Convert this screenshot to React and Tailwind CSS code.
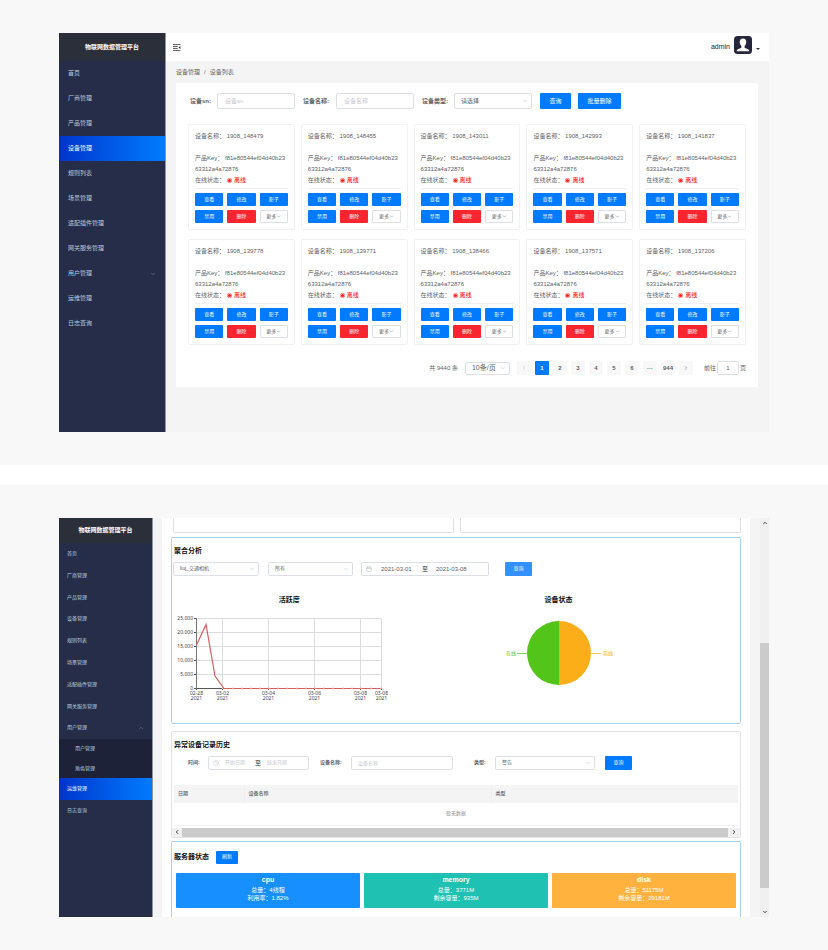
import React from "react";
import { Calendar, ChevronDown, ChevronLeft, ChevronRight, ChevronUp, Clock } from "lucide-react";

const menu = [
  "首页",
  "厂商管理",
  "产品管理",
  "设备管理",
  "规则列表",
  "场景管理",
  "适配插件管理",
  "网关服务管理",
  "用户管理",
  "运维管理",
  "日志查询",
];

const devices = [
  "1908_148479",
  "1908_148455",
  "1908_143011",
  "1908_142993",
  "1908_141837",
  "1908_139778",
  "1908_139771",
  "1908_138466",
  "1908_137571",
  "1908_137206",
];

const activeItem = "bg-gradient-to-r from-[#0033cc] to-[#007bff] text-white";

function SelectBox({ id, label, value, className }) {
  return (
    <div className={`relative shrink-0 ${className}`}>
      <select
        id={id}
        aria-label={label}
        className="block h-full w-full appearance-none rounded-xs border border-[#dcdfe6] bg-white pl-[6px] text-[#606266]"
      >
        <option>{value}</option>
      </select>
      <ChevronDown className="pointer-events-none absolute top-1/2 right-1 size-[6px] -translate-y-1/2 text-[#b4b8c0]" />
    </div>
  );
}

function DeviceCard({ name }) {
  const button = "h-[13px] rounded-[1px] text-[5px] leading-[11px] text-white";
  return (
    <article className="rounded-xs border border-[#f0f1f4] p-[6px] text-[6px] leading-[11px] text-[#606266]">
      <h3>{`设备名称：\u00a0${name}`}</h3>
      <p className="mt-[11px] pr-px break-all">{"产品Key：\u00a0f81e80544ef04d40b2363312a4a72876"}</p>
      <p className="flex items-center">
        <span className="mr-[2px]">在线状态：</span>
        <svg viewBox="0 0 10 10" className="mr-[2px] size-[5px]">
          <circle cx="5" cy="5" r="4.5" fill="none" stroke="#ff1f1f" strokeWidth="1" />
          <circle cx="5" cy="5" r="3.2" fill="#ff1f1f" />
        </svg>
        <span className="font-medium text-[#ff1f1f]">离线</span>
      </p>
      <div className="mt-[2px] grid grid-cols-3 gap-1 border-t border-[#eef0f4] pt-1">
        <button className={`${button} bg-[#007bff]`}>查看</button>
        <button className={`${button} bg-[#007bff]`}>修改</button>
        <button className={`${button} bg-[#007bff]`}>影子</button>
        <button className={`${button} bg-[#007bff]`}>禁用</button>
        <button className={`${button} bg-[#f9252f]`}>删除</button>
        <button className="flex h-[13px] items-center justify-center rounded-[1px] border border-[#dcdfe6] bg-white text-[5px] text-[#606266]">
          更多
          <ChevronDown className="size-[5px]" />
        </button>
      </div>
    </article>
  );
}

function DevicesScreen() {
  const input =
    "h-full w-[78px] shrink-0 rounded-xs border border-[#dcdfe6] bg-white px-[7px] font-normal placeholder:text-[#c6c9d0]";
  const page = "flex size-[14px] items-center justify-center rounded-[1px] bg-[#f8f8f9] font-bold text-[#606266]";
  return (
    <div className="mx-[59px] flex min-h-[399px] bg-[#f4f4f4] text-[6px] text-[#606266]">
      <aside className="w-[107px] shrink-0 border-r border-[#8f94a3] bg-[#252d49]">
        <h1 className="flex h-7 items-center justify-center bg-[#2b2f3a] font-bold text-white">物联网数据管理平台</h1>
        <nav>
          {menu.map((item) => (
            <a
              key={item}
              href="#"
              className={`flex h-[25px] items-center pr-[9px] pl-[9px] ${item === "设备管理" ? activeItem : "text-[#bfcbd9]"}`}
            >
              {item}
              {item === "用户管理" && <ChevronDown className="ml-auto size-[6px] text-[#8d97ab]" />}
            </a>
          ))}
        </nav>
      </aside>
      <div className="min-w-0 flex-1">
        <header className="flex h-7 items-center bg-white pr-[9px] pl-[7px]">
          <button aria-label="收起菜单" className="text-[#33363d]">
            <svg viewBox="0 0 16 14" className="h-[7px] w-2" fill="none" stroke="currentColor" strokeWidth="1.6">
              <path d="M0 1.2H15M0 5.1H9.5M0 8.9H9.5M0 12.8H15" />
              <path d="M15 4L11 7L15 10Z" fill="currentColor" stroke="none" />
            </svg>
          </button>
          <span className="ml-auto text-[7px] text-[#20242c]">admin</span>
          <svg viewBox="0 0 36 36" className="mb-[5px] ml-1 size-[18px]">
            <rect width="36" height="36" rx="7" fill="#26263a" />
            <path
              d="M18 5c4.4 0 6.8 3.2 6.5 7.600-.2 3.500-1.500 6-3.300 7.500v2.600c0 1.200 1.200 1.700 3.300 2.500 3.600 1.300 6 2 6.300 5.300H5.200c.3-3.300 2.700-4 6.300-5.300 2.100-.8 3.300-1.300 3.300-2.500v-2.600c-1.800-1.500-3.100-4-3.300-7.500C11.200 8.200 13.600 5 18 5Z"
              fill="#fff"
            />
          </svg>
          <svg viewBox="0 0 8 4" className="mt-1 ml-1 h-[2px] w-1">
            <path d="M0 0H8L4 4Z" fill="#303133" />
          </svg>
        </header>
        <nav aria-label="面包屑" className="flex h-[22px] items-center gap-1 pl-[10px]">
          <a href="#">设备管理</a>
          <span>/</span>
          <span>设备列表</span>
        </nav>
        <main className="mr-[11px] ml-[10px] bg-white px-3 pt-[10px] pb-3">
          <form className="flex h-4 items-center pl-[2px] font-bold">
            <label htmlFor="sn" className="w-[27px] shrink-0">
              设备sn:
            </label>
            <input id="sn" placeholder="设备sn" className={input} />
            <label htmlFor="name" className="ml-2 w-[33px] shrink-0">
              设备名称:
            </label>
            <input id="name" placeholder="设备名称" className={input} />
            <label htmlFor="type" className="ml-2 w-8 shrink-0">
              设备类型:
            </label>
            <SelectBox id="type" value="请选择" className="h-full w-[78px] font-normal" />
            <button type="button" className="ml-2 h-full w-[31px] rounded-[1px] bg-[#007bff] font-normal text-white">
              查询
            </button>
            <button type="button" className="ml-[7px] h-full w-[43px] rounded-[1px] bg-[#007bff] font-normal text-white">
              批量删除
            </button>
          </form>
          <div className="mt-[15px] grid grid-cols-5 gap-x-[6px] gap-y-[9px]">
            {devices.map((name) => (
              <DeviceCard key={name} name={name} />
            ))}
          </div>
          <nav aria-label="分页" className="mt-4 flex h-[14px] items-center justify-end">
            <span>共 9440 条</span>
            <SelectBox label="每页条数" value="10条/页" className="ml-[7px] h-[13px] w-[45px] text-[7px]" />
            <div className="ml-[7px] flex gap-1">
              <button aria-label="上一页" className={page}>
                <ChevronLeft className="size-[6px] text-[#a9adb5]" />
              </button>
              <button className="flex size-[14px] items-center justify-center rounded-[1px] bg-[#007bff] font-bold text-white">
                1
              </button>
              {["2", "3", "4", "5", "6", "···", "944"].map((n) => (
                <button key={n} className={page}>
                  {n}
                </button>
              ))}
              <button aria-label="下一页" className={page}>
                <ChevronRight className="size-[6px]" />
              </button>
            </div>
            <label htmlFor="goto" className="ml-[11px]">
              前往
            </label>
            <input
              id="goto"
              defaultValue="1"
              className="mx-px h-full w-[22px] rounded-xs border border-[#dcdfe6] text-center"
            />
            <span>页</span>
          </nav>
        </main>
      </div>
    </div>
  );
}

function ActivityChart() {
  const rows = ["25,000", "20,000", "15,000", "10,000", "5,000", "0"];
  const columns = [
    [23.5, "02-28"],
    [49.5, "03-02"],
    [95.5, "03-04"],
    [141.5, "03-06"],
    [187.5, "03-08"],
    [208.5, "03-08"],
  ];
  const dots = [60, 69, 78, 87, 96, 105, 114, 124, 133, 142, 151, 160, 170, 179, 188, 198, 208];
  return (
    <svg width="232" height="110" className="font-['Noto_Sans',sans-serif] text-[5px]" fill="#444">
      {rows.map((label, i) => (
        <g key={label}>
          <path d={`M23 ${12.5 + i * 14}H209`} stroke={i === 5 ? "#555" : "#ddd"} />
          <path d={`M21 ${12.5 + i * 14}H23`} stroke="#555" />
          <text x="20" y={14 + i * 14} textAnchor="end">
            {label}
          </text>
        </g>
      ))}
      {columns.map(([x, label], i) => (
        <g key={x} textAnchor="middle">
          <path d={`M${x} 12V83`} stroke={i === 0 ? "#777" : "#ddd"} />
          <path d={`M${x} 83V84`} stroke="#555" />
          <text x={x} y="89">
            {label}
          </text>
          <text x={x} y="94">
            2021
          </text>
        </g>
      ))}
      <path d="M23.500 39L33 18.500L42 70L51 82.500H208.500" fill="none" stroke="#d4605e" strokeWidth="1.200" />
      {dots.map((x) => (
        <circle key={x} cx={x} cy="82.500" r="0.700" fill="#fff" stroke="#d4605e" strokeWidth="0.500" />
      ))}
    </svg>
  );
}

function StatusPie() {
  return (
    <svg width="120" height="110" className="text-[5px]">
      <path d="M60 15A32 32 0 0 0 60 79Z" fill="#52c41a" />
      <path d="M60 15A32 32 0 0 1 60 79Z" fill="#fcae18" />
      <path d="M18 47.500H28" stroke="#52c41a" strokeOpacity="0.700" />
      <path d="M92 47.500H102" stroke="#fcae18" strokeOpacity="0.700" />
      <text x="17" y="49" textAnchor="end" fill="#52c41a">
        在线
      </text>
      <text x="104" y="49" fill="#fcae18">
        离线
      </text>
    </svg>
  );
}

function Tile({ name, lines, color }) {
  return (
    <div className={`h-[35px] rounded-[1px] pt-[2px] text-center text-[6px] leading-[8px] text-white ${color}`}>
      <h3 className="mb-px text-[7px] leading-[10px] font-bold">{name}</h3>
      {lines.map((line) => (
        <p key={line}>{line}</p>
      ))}
    </div>
  );
}

function OperationsScreen() {
  const item = "flex flex-1 items-center px-2 text-[#bfcbd9]";
  const title = "text-[7px] leading-[12px] font-bold text-[#111]";
  const range = "flex h-full shrink-0 items-center rounded-xs border border-[#dcdfe6] bg-white";
  const button = "h-full w-[27px] shrink-0 rounded-[1px] text-white";
  return (
    <div className="mx-[59px] flex h-[399px] overflow-hidden bg-[#f4f4f4] text-[5px] text-[#606266]">
      <aside className="w-[94px] shrink-0 border-r border-[#8f94a3] bg-[#252d49]">
        <h1 className="flex h-[25px] items-center justify-center bg-[#2b2f3a] text-[6px] font-bold text-white">
          物联网数据管理平台
        </h1>
        <nav>
          <div className="flex h-[196px] flex-col">
            {menu.slice(0, 9).map((name) => (
              <a key={name} href="#" className={item}>
                {name}
                {name === "用户管理" && <ChevronUp className="ml-auto size-[6px] text-[#8d97ab]" />}
              </a>
            ))}
          </div>
          <div className="flex h-[39px] flex-col bg-[#1d2239] pl-2">
            <a href="#" className={item}>
              用户管理
            </a>
            <a href="#" className={item}>
              角色管理
            </a>
          </div>
          <a href="#" className={`flex h-[22px] items-center px-2 ${activeItem}`}>
            运维管理
          </a>
          <a href="#" className="flex h-[22px] items-center px-2 text-[#bfcbd9]">
            日志查询
          </a>
        </nav>
      </aside>
      <main className="mr-[10px] ml-[9px] min-w-0 flex-1 bg-white px-[9px]">
        <div className="ml-[2px] grid h-[15px] grid-cols-2 gap-[6px]">
          <div className="rounded-b-xs border border-t-0 border-[#dcdfe6]" />
          <div className="rounded-b-xs border border-t-0 border-[#dcdfe6]" />
        </div>

        <section className="mt-1 rounded-xs border border-[#a9d3fb] pt-[7px] pb-[7px] pl-px">
          <h2 className={`pl-px ${title}`}>聚合分析</h2>
          <form className="mt-[5px] flex h-[14px]">
            <SelectBox label="产品" value="liuj_交通相机" className="h-full w-[86px]" />
            <SelectBox label="设备" value="所有" className="ml-[9px] h-full w-[85px]" />
            <div className={`ml-2 w-32 text-[6px] ${range}`}>
              <Calendar className="ml-1 size-[6px] text-[#b4b8c0]" />
              <input aria-label="开始日期" defaultValue="2021-03-01" className="ml-[9px] w-[33px]" />
              <span className="w-[22px] text-center text-[#303133]">至</span>
              <input aria-label="结束日期" defaultValue="2021-03-08" className="w-[33px]" />
            </div>
            <button type="button" className={`ml-4 bg-[#3391ff] ${button}`}>
              查询
            </button>
          </form>
          <div className="mt-[18px] flex text-center">
            <figure className="w-[41%]">
              <figcaption className={title}>活跃度</figcaption>
              <ActivityChart />
            </figure>
            <figure className="flex w-[54%] flex-col items-center">
              <figcaption className={title}>设备状态</figcaption>
              <StatusPie />
            </figure>
          </div>
        </section>

        <section className="mt-[7px] rounded-xs border border-[#e2e4e8] pt-[7px]">
          <h2 className={`pl-[2px] ${title}`}>异常设备记录历史</h2>
          <form className="mt-[5px] flex h-[14px] items-center pl-4">
            <label htmlFor="from" className="w-5 shrink-0 font-bold">
              时间:
            </label>
            <div className={`w-[101px] ${range}`}>
              <Clock className="ml-1 size-[6px] text-[#c0c4cc]" />
              <input
                id="from"
                placeholder="开始日期"
                className="ml-[6px] w-[25px] placeholder:text-[#c6c9d0]"
              />
              <span className="w-4 text-center text-[6px] text-[#303133]">至</span>
              <input
                aria-label="结束日期"
                placeholder="结束日期"
                className="ml-px w-[25px] placeholder:text-[#c6c9d0]"
              />
            </div>
            <label htmlFor="record-name" className="ml-[11px] w-[31px] shrink-0 font-bold">
              设备名称:
            </label>
            <input
              id="record-name"
              placeholder="设备名称"
              className="h-full w-[102px] shrink-0 rounded-xs border border-[#dcdfe6] px-[6px] placeholder:text-[#c6c9d0]"
            />
            <label htmlFor="record-type" className="ml-[21px] w-[21px] shrink-0 font-bold">
              类型:
            </label>
            <SelectBox id="record-type" value="警告" className="h-full w-[100px]" />
            <button type="button" className={`ml-[10px] bg-[#007bff] ${button}`}>
              查询
            </button>
          </form>
          <div className="mx-[2px] mt-[15px]">
            <table className="w-full table-fixed border-collapse text-left">
              <thead>
                <tr className="h-[18px] bg-[#f4f4f5]">
                  <th className="w-[70px] pl-1 font-medium">日期</th>
                  <th className="w-[247px] border-l border-[#ebeef5] pl-1 font-medium">设备名称</th>
                  <th className="border-l border-[#ebeef5] pl-1 font-medium">类型</th>
                </tr>
              </thead>
              <tbody>
                <tr className="h-[22px] border-b border-[#f0f1f4]">
                  <td colSpan="3" className="text-center text-[#909399]">
                    暂无数据
                  </td>
                </tr>
              </tbody>
            </table>
          </div>
          <div className="mt-[2px] flex h-[9px] items-center bg-[#f1f1f1] text-[#444]">
            <ChevronLeft strokeWidth={4} className="mx-[2px] size-[6px]" />
            <div className="h-full flex-1 bg-[#cbcbcb]" />
            <ChevronRight strokeWidth={4} className="mx-[3px] size-[6px]" />
          </div>
        </section>

        <section className="mt-[3px] h-[90px] rounded-xs border border-[#a9d3fb] px-1 pt-[9px]">
          <div className="-ml-[2px] flex h-[13px] items-center gap-[7px]">
            <h2 className={title}>服务器状态</h2>
            <button className="h-full w-[22px] rounded-[1px] bg-[#007bff] text-white">刷新</button>
          </div>
          <div className="mt-[9px] grid grid-cols-3 gap-1">
            <Tile name="cpu" lines={["总量：4线程", "利用率：1.82%"]} color="bg-[#188fff]" />
            <Tile name="memory" lines={["总量：3771M", "剩余容量：935M"]} color="bg-[#1fc1b2]" />
            <Tile name="disk" lines={["总量：51175M", "剩余容量：29181M"]} color="bg-[#ffb23e]" />
          </div>
        </section>
      </main>
      <div className="flex w-[9px] shrink-0 flex-col items-center bg-[#f0f0f0] text-[#444]">
        <ChevronUp strokeWidth={4} className="mt-[2px] size-[6px]" />
        <div className="mt-[117px] w-full flex-1 bg-[#cbcbcb]" />
        <ChevronDown strokeWidth={4} className="mt-[21px] mb-[2px] size-[6px]" />
      </div>
    </div>
  );
}

export default function App() {
  return (
    <div className="flex flex-col gap-5 bg-white font-['Liberation_Sans','Noto_Sans_CJK_SC',sans-serif]">
      <div className="bg-[#f8f8f8] py-[33px]">
        <DevicesScreen />
      </div>
      <div className="bg-[#f8f8f8] py-[33px]">
        <OperationsScreen />
      </div>
    </div>
  );
}
